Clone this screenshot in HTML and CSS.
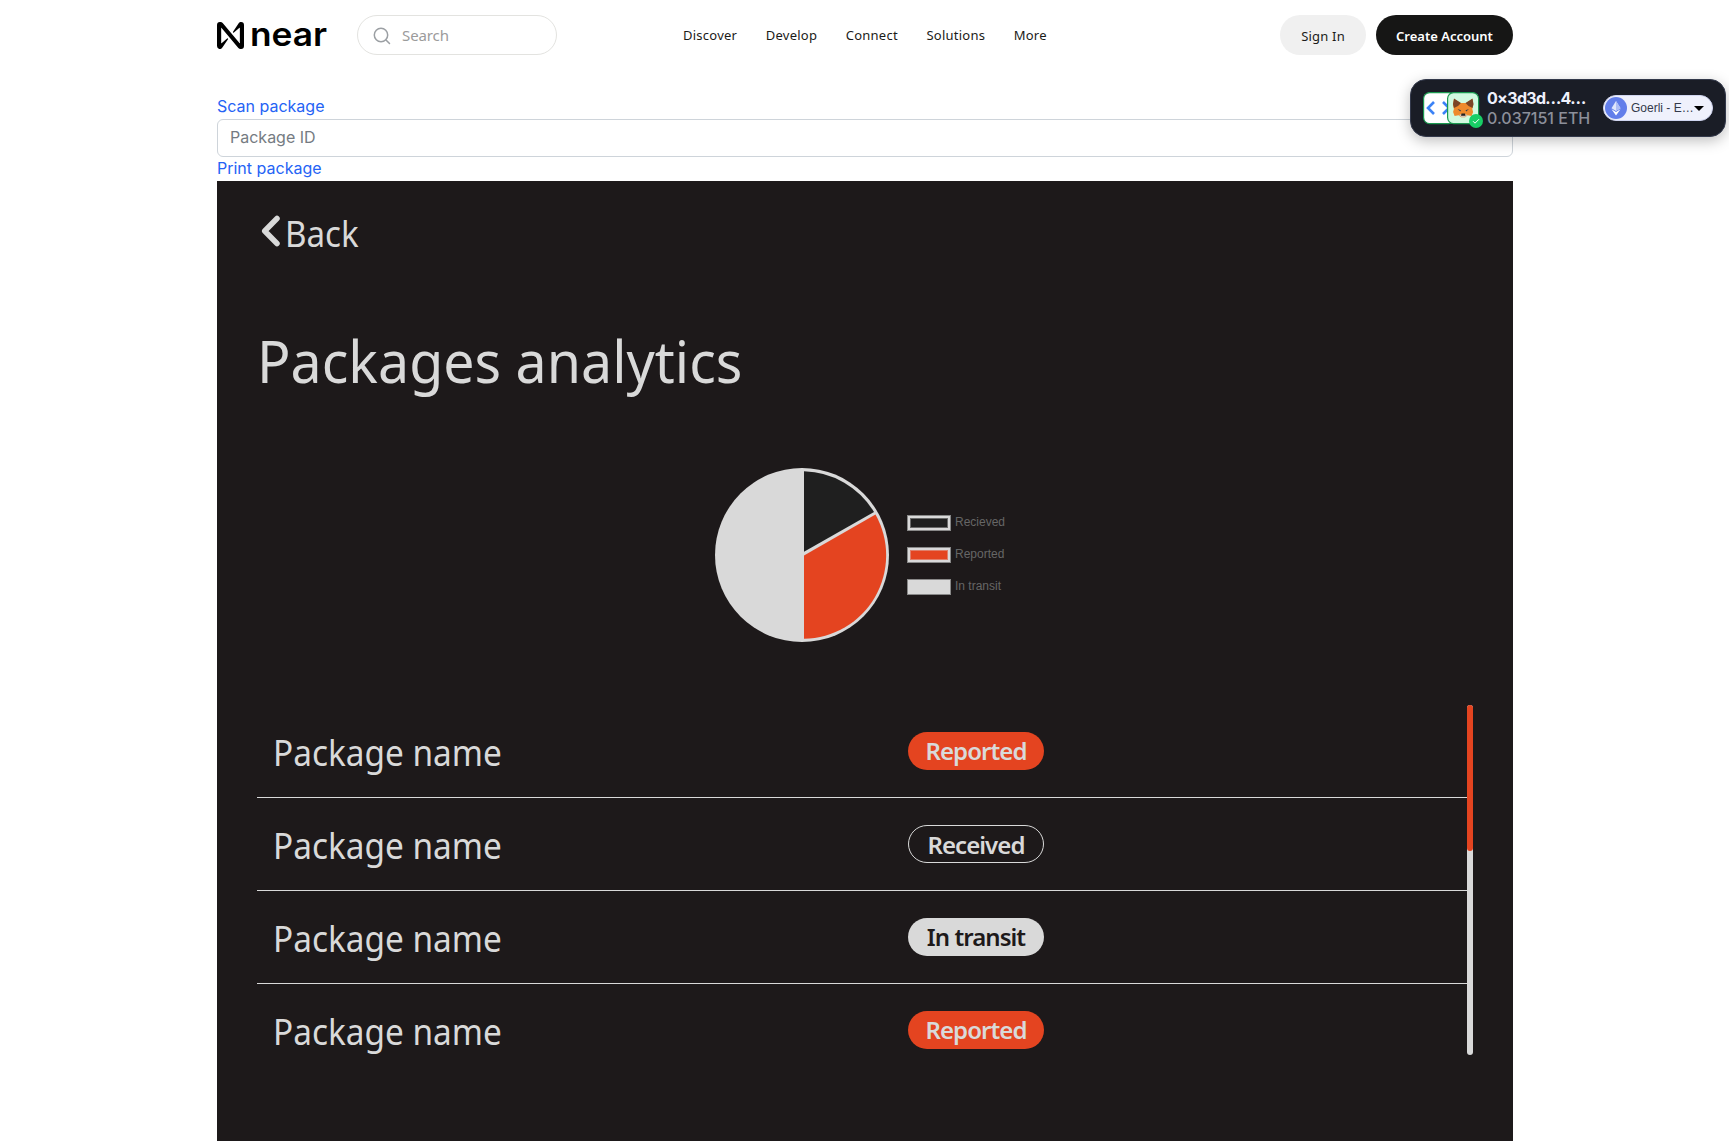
FILE: index.html
```html
<!DOCTYPE html>
<html lang="en">
<head>
<meta charset="utf-8">
<title>Packages analytics</title>
<link rel="stylesheet" href="styles.css">
</head>
<body>
<div class="container">
  <header class="header">
    <a class="logo">
      <svg width="27" height="27" viewBox="0 0 24 24"><path d="M21.443 0c-.888 0-1.713.46-2.178 1.217L14.253 8.660a.533.533 0 0 0 .792.702l4.934-4.279a.2.2 0 0 1 .334.151v13.400a.2.2 0 0 1-.354.128L5.044.905A2.555 2.555 0 0 0 3.094 0h-.521A2.573 2.573 0 0 0 0 2.573v18.854A2.573 2.573 0 0 0 4.765 22.776l5.012-7.442a.533.533 0 0 0-.792-.702l-4.934 4.279a.2.2 0 0 1-.334-.151V5.360a.2.2 0 0 1 .354-.128l14.915 17.863c.486.574 1.200.905 1.950.905h.521A2.573 2.573 0 0 0 24 21.427V2.573A2.573 2.573 0 0 0 21.443 0z"/></svg>
      <span class="wordmark">near</span>
    </a>
    <div class="search">
      <svg width="18" height="18" viewBox="0 0 18 18" fill="none" stroke="#9b9fa3" stroke-width="1.5" stroke-linecap="round"><circle cx="8" cy="8" r="6.700"/><path d="M13 13l3.500 3.500"/></svg>
      <span>Search</span>
    </div>
    <nav class="nav"><a>Discover</a><a>Develop</a><a>Connect</a><a>Solutions</a><a>More</a></nav>
    <div class="actions"><a class="btn signin">Sign In</a><a class="btn create">Create Account</a></div>
  </header>

  <div class="tools">
    <a class="link">Scan package</a>
    <div class="field">Package ID</div>
    <a class="link print">Print package</a>
  </div>

  <main class="panel">
    <a class="back">
      <svg width="20" height="32" viewBox="0 0 20 32" fill="none" stroke="#d9d9d9" stroke-width="5.500" stroke-linecap="round" stroke-linejoin="round"><path d="M16 3.500L3.700 16L16 28.500"/></svg>
      <span>Back</span>
    </a>
    <h1 class="title">Packages analytics</h1>
    <section class="chart">
      <svg class="pie" width="174" height="174" viewBox="0 0 174 174">
        <circle cx="87" cy="87" r="87" fill="#d9d9d9"/>
        <path d="M89 3.300A84 84 0 0 1 159 44L89 83.800Z" fill="#1f1f1f"/>
        <path d="M160.500 46.500A83.500 83.500 0 0 1 89 170.800V87.500Z" fill="#e44420"/>
      </svg>
      <ul class="legend">
        <li><i class="swatch dark"></i>Recieved</li>
        <li><i class="swatch orange"></i>Reported</li>
        <li><i class="swatch light"></i>In transit</li>
      </ul>
    </section>
    <section class="list">
      <div class="rows">
        <div class="row"><span class="name">Package name</span><span class="badge reported">Reported</span></div>
        <div class="row"><span class="name">Package name</span><span class="badge received">Received</span></div>
        <div class="row"><span class="name">Package name</span><span class="badge transit">In transit</span></div>
        <div class="row"><span class="name">Package name</span><span class="badge reported">Reported</span></div>
      </div>
      <div class="track"><div class="thumb"></div></div>
    </section>
  </main>
</div>

<aside class="wallet">
  <div class="wallet-icons">
    <svg width="61" height="37" viewBox="0 0 61 37">
      <rect x=".6" y=".6" width="31" height="31" rx="6" fill="#fff" stroke="#1b9a50" stroke-width="1.200"/>
      <path d="M11 10L5 16l6 6M20 10L26 16l-6 6" fill="none" stroke="#3b82f6" stroke-width="2.600"/>
      <rect x="24.600" y=".6" width="31" height="31" rx="6" fill="#d1fae0" stroke="#1b9a50" stroke-width="1.200"/>
      <path d="M31 7l6.500 4h5.500l6.500-4 .8 6-1 4 .8 3-1.500 4-4-.8-2.500 2h-4l-2.500-2-4 .8-1.500-4 .8-3-1-4z" fill="#ee8a2c"/>
      <path d="M31 6.500l7 4.500-3 3-4 2-1-4zM49.500 6.500l-7 4.500 3 3 4 2 1-4z" fill="#7a4526"/>
      <path d="M34.500 17l3.500 1.200-.7 1.300zM46 17l-3.500 1.200.7 1.300z" fill="#33404e"/>
      <path d="M36 23l2.500-1h3.500l2.500 1-2.500 2.200h-3.500z" fill="#d8c4b4"/>
      <path d="M38.500 21.500h3.500l.5 2.200h-4.500z" fill="#222"/>
      <circle cx="53" cy="29" r="7" fill="#18ce66"/>
      <path d="M50 29.200l2 2 4-4" fill="none" stroke="#fff"/>
    </svg>
  </div>
  <div class="account"><strong>0×3d3d…4…</strong><span>0.037151 ETH</span></div>
  <div class="network">
    <svg width="22" height="22" viewBox="0 0 22 22"><circle cx="11" cy="11" r="11" fill="#627eea"/><path d="M11 4l4.500 7.300-4.500 2.700-4.500-2.700z" fill="#dfe5fb"/><path d="M11 15l4.500-2.700L11 18.500l-4.500-6.200z" fill="#fff"/><path d="M11 4v10l4.500-2.700z" fill="#aebdf5"/></svg>
    <span>Goerli - E…</span>
    <svg width="10" height="5" viewBox="0 0 10 5"><path d="M0 0h10L5 5z"/></svg>
  </div>
</aside>
</body>
</html>
```
FILE: styles.css
```css
* { box-sizing: border-box; }
body { margin: 0; height: 1141px; overflow: hidden; background: #fff; font-family: "Noto Sans", "Open Sans", sans-serif; }
.container { width: 1296px; margin-left: 217px; }

.header { display: flex; align-items: flex-start; height: 94px; padding-top: 15px; }
.logo { display: flex; width: 140px; padding-top: 7px; gap: 6px; }
.wordmark { height: 26px; margin-top: -1px; font: 600 33px/26px Inter, sans-serif; color: #000; transform: scaleX(1.07); transform-origin: left; }
.search { display: flex; align-items: center; width: 200px; height: 40px; padding: 0 0 0 15px; gap: 11px; border: 1px solid #e3e3e0; border-radius: 20px; font-size: 15px; line-height: 20px; letter-spacing: -.1px; color: #9b9b9b; }
.search svg { margin-top: 2px; }
.nav { display: flex; gap: 28.5px; margin-left: 126px; padding-top: 10px; font-size: 13px; line-height: 20px; font-weight: 450; letter-spacing: .25px; color: #1b1b18; }
.actions { display: flex; gap: 10px; margin-left: auto; }
.btn { height: 40px; border-radius: 20px; font-size: 13px; line-height: 42px; font-weight: 450; letter-spacing: .2px; text-align: center; white-space: nowrap; }
.signin { width: 86px; background: #f0f0f0; color: #1b1b18; }
.create { width: 137px; background: #161615; color: #fff; font-weight: 600; letter-spacing: 0; }

.tools { height: 87px; font: 16px/24px Inter, sans-serif; }
.link { display: block; height: 25px; color: #2563f5; }
.print { margin-top: -1px; }
.field { height: 38px; padding: 5px 12px; border: 1px solid #ced4da; border-radius: 6px; color: #757b82; }

.panel { height: 960px; padding: 0 40px; background: #1d191a; color: #d9d9d9; }
.back { display: flex; align-items: flex-start; gap: 4px; height: 132px; padding: 34px 0 0 4px; }
.back span { font-size: 36px; line-height: 37px; transform: scaleX(.92); transform-origin: left; }
.title { width: max-content; margin: 0; height: 155px; font-size: 58px; line-height: 95px; font-weight: 400; transform: scaleX(.957); transform-origin: left; }
.chart { display: flex; height: 237px; padding-left: 458px; }
.legend { display: flex; flex-direction: column; gap: 16px; margin: 0; padding: 47px 0 0 18px; list-style: none; font: 12px/14px "Liberation Sans", sans-serif; color: #666; }
.legend li { display: flex; gap: 4px; height: 16px; line-height: 15px; }
.swatch { width: 44px; height: 16px; border: 3px solid #d9d9d9; outline: 1px solid #888; outline-offset: -1px; box-shadow: inset 0 0 0 1px rgba(217,217,217,.4); }
.dark { background: #1f1f1f; }
.orange { background: #e44420; }
.light { background: #d9d9d9; }

.list { display: flex; width: 1216px; height: 350px; }
.rows { flex: 1; }
.row { display: flex; height: 93px; padding: 27px 0 0 16px; border-bottom: 1px solid #d9d9d9; }
.row:last-child { height: 71px; border-bottom: 0; }
.name { width: 635px; font-size: 36px; line-height: 42px; transform: scaleX(.927); transform-origin: left; }
.badge { width: 136px; height: 38px; border-radius: 19px; font-size: 24px; line-height: 38px; font-weight: 600; letter-spacing: -.95px; text-align: center; }
.reported { background: #e44420; }
.received { border: 1px solid #d9d9d9; line-height: 37px; }
.transit { background: #d9d9d9; color: #1d191a; }
.track { width: 6px; height: 350px; border-radius: 3px; background: #d9d9d9; }
.thumb { height: 146px; border-radius: 3px; background: #e44420; }

/* Wallet status floats over the page */
.wallet { position: absolute; left: 1410px; top: 79px; display: flex; width: 316px; height: 58px; padding: 12px; border: 1px solid #33394b; border-radius: 16px; background: #1a1d26; box-shadow: 0 4px 14px rgba(0,0,0,.25); font-family: Inter, sans-serif; }
.wallet-icons { width: 64px; flex: none; }
.account { display: flex; flex-direction: column; width: 116px; margin-top: -4px; font-size: 16px; line-height: 20px; font-weight: 500; white-space: nowrap; color: #8c8f9a; }
.account strong { font-weight: 700; letter-spacing: -.7px; color: #eff1fc; }
.network { display: flex; align-items: center; width: 110px; height: 26px; margin-top: 3px; padding: 0 2px 0 1px; border: 1px solid #d0d5f0; border-radius: 13px; background: #eff1fc; font: 12px/20px "Liberation Sans", sans-serif; color: #33394b; }
.network span { width: 63px; margin-left: 4px; white-space: nowrap; }
```
